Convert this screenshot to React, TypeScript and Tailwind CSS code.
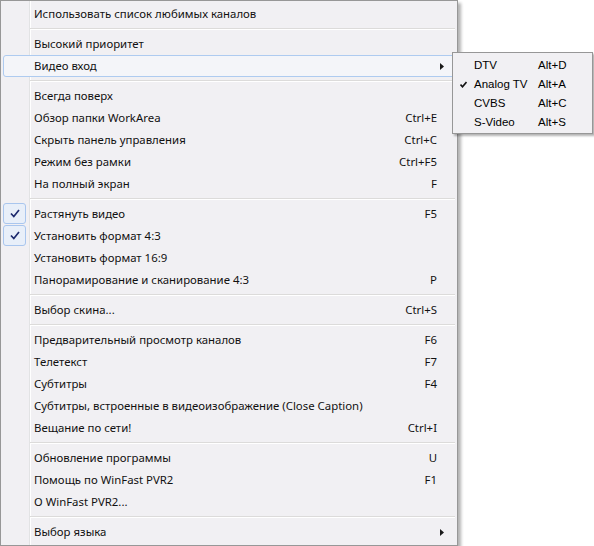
import React from 'react';

type Item = {
  label: string;
  shortcut?: string;
  checked?: boolean;
  sub?: boolean;
  hover?: boolean;
};

const groups: Item[][] = [
  [{ label: 'Использовать список любимых каналов' }],
  [{ label: 'Высокий приоритет' }, { label: 'Видео вход', sub: true, hover: true }],
  [
    { label: 'Всегда поверх' },
    { label: 'Обзор папки WorkArea', shortcut: 'Ctrl+E' },
    { label: 'Скрыть панель управления', shortcut: 'Ctrl+C' },
    { label: 'Режим без рамки', shortcut: 'Ctrl+F5' },
    { label: 'На полный экран', shortcut: 'F' },
  ],
  [
    { label: 'Растянуть видео', shortcut: 'F5', checked: true },
    { label: 'Установить формат 4:3', checked: true },
    { label: 'Установить формат 16:9' },
    { label: 'Панорамирование и сканирование 4:3', shortcut: 'P' },
  ],
  [{ label: 'Выбор скина...', shortcut: 'Ctrl+S' }],
  [
    { label: 'Предварительный просмотр каналов', shortcut: 'F6' },
    { label: 'Телетекст', shortcut: 'F7' },
    { label: 'Субтитры', shortcut: 'F4' },
    { label: 'Субтитры, встроенные в видеоизображение (Close Caption)' },
    { label: 'Вещание по сети!', shortcut: 'Ctrl+I' },
  ],
  [
    { label: 'Обновление программы', shortcut: 'U' },
    { label: 'Помощь по WinFast PVR2', shortcut: 'F1' },
    { label: 'О WinFast PVR2...' },
  ],
  [{ label: 'Выбор языка', sub: true }],
];

const inputs = [
  { label: 'DTV', shortcut: 'Alt+D' },
  { label: 'Analog TV', shortcut: 'Alt+A', checked: true },
  { label: 'CVBS', shortcut: 'Alt+C' },
  { label: 'S-Video', shortcut: 'Alt+S' },
];

const Arrow = () => (
  <svg width="4" height="7" viewBox="0 0 4 7" className="block">
    <polygon points="0,0 4,3.5 0,7" fill="#1a1a1a" />
  </svg>
);

const MenuRow: React.FC<{ item: Item }> = ({ item }) => (
  <div
    className={`mx-[2px] h-[22px] flex items-center rounded-[3px] border ${
      item.hover ? 'border-[#aecbf0] bg-[#f4f5f9]' : 'border-transparent'
    }`}
  >
    <div className="w-[31px] h-full shrink-0 flex items-start -ml-px">
      {item.checked && (
        <div className="w-[23px] h-[21px] -mt-px rounded-[3px] border border-[#a9c6ee] bg-[#e8eff9] flex items-center justify-center">
          <svg width="10" height="9" viewBox="0 0 10 9">
            <path d="M1 4.5 L3.8 7.5 L9 1" fill="none" stroke="#1d2a6e" strokeWidth="1.7" />
          </svg>
        </div>
      )}
    </div>
    <span className="flex-1 whitespace-nowrap">{item.label}</span>
    <span className="whitespace-nowrap pr-[3px]">{item.shortcut}</span>
    <div className="w-[14px] shrink-0 flex justify-start">{item.sub && <Arrow />}</div>
  </div>
);

export default function App() {
  return (
    <div className="relative w-[594px] h-[546px] bg-white text-[#111]">
      <div
        className="w-[458px] h-[546px] border border-[#979797] bg-[#f1f0f3] pt-[2px] text-[11.4px] leading-none shadow-[3px_3px_3px_rgba(0,0,0,0.3)] bg-[linear-gradient(to_right,transparent_28px,#e2e3e4_28px,#e2e3e4_29px,#ffffff_29px,#ffffff_30px,transparent_30px)]"
        style={{ fontFamily: '"Noto Sans", "Open Sans", sans-serif' }}
      >
        {groups.map((group, gi) => (
          <div key={gi}>
            {gi > 0 && (
              <div className="h-[8px] flex items-center">
                <div className="ml-[29px] mr-[2px] flex-1 h-[2px] border-t border-[#dcdbda] border-b border-b-white" />
              </div>
            )}
            {group.map((item) => (
              <MenuRow key={item.label} item={item} />
            ))}
          </div>
        ))}
      </div>

      <div
        className="absolute left-[452px] top-[52px] w-[141px] h-[82px] border border-[#979797] bg-[#f1f0f3] pt-[3px] text-[11.5px] leading-none text-black shadow-[2px_2px_2px_rgba(0,0,0,0.3)]"
        style={{ fontFamily: '"Liberation Sans", Arial, sans-serif' }}
      >
        {inputs.map((it) => (
          <div key={it.label} className="h-[19px] flex items-center">
            <div className="w-[21px] shrink-0 flex justify-center">
              {it.checked && (
                <svg width="7" height="7" viewBox="0 0 7 7">
                  <path d="M0.5 3.5 L2.5 5.8 L6.5 1" fill="none" stroke="#111" strokeWidth="1.6" />
                </svg>
              )}
            </div>
            <span className="w-[64px] whitespace-nowrap">{it.label}</span>
            <span className="whitespace-nowrap">{it.shortcut}</span>
          </div>
        ))}
      </div>
    </div>
  );
}
